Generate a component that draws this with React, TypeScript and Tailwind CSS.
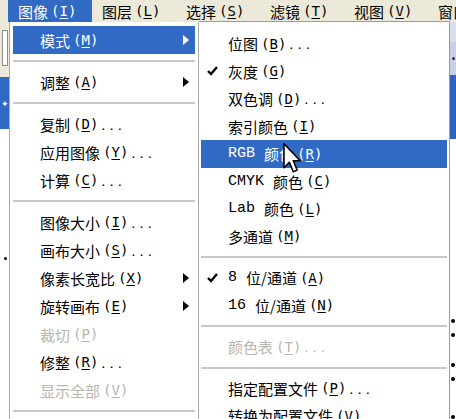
import React from 'react';

type Row = {
  sep?: boolean;
  label?: string;
  latin?: string;
  k?: string;
  dots?: boolean;
  arrow?: boolean;
  off?: boolean;
  check?: boolean;
  active?: boolean;
};

const leftItems: Row[] = [
  { label: '模式', k: 'M', arrow: true, active: true },
  { sep: true },
  { label: '调整', k: 'A', arrow: true },
  { sep: true },
  { label: '复制', k: 'D', dots: true },
  { label: '应用图像', k: 'Y', dots: true },
  { label: '计算', k: 'C', dots: true },
  { sep: true },
  { label: '图像大小', k: 'I', dots: true },
  { label: '画布大小', k: 'S', dots: true },
  { label: '像素长宽比', k: 'X', arrow: true },
  { label: '旋转画布', k: 'E', arrow: true },
  { label: '裁切', k: 'P', off: true },
  { label: '修整', k: 'R', dots: true },
  { label: '显示全部', k: 'V', off: true },
  { sep: true },
];

const subItems: Row[] = [
  { label: '位图', k: 'B', dots: true },
  { label: '灰度', k: 'G', check: true },
  { label: '双色调', k: 'D', dots: true },
  { label: '索引颜色', k: 'I' },
  { latin: 'RGB', label: '颜色', k: 'R', active: true },
  { latin: 'CMYK', label: '颜色', k: 'C' },
  { latin: 'Lab', label: '颜色', k: 'L' },
  { label: '多通道', k: 'M' },
  { sep: true },
  { latin: '8', label: '位/通道', k: 'A', check: true },
  { latin: '16', label: '位/通道', k: 'N' },
  { sep: true },
  { label: '颜色表', k: 'T', dots: true, off: true },
  { sep: true },
  { label: '指定配置文件', k: 'P', dots: true },
  { label: '转换为配置文件', k: 'V', dots: true },
];

const Mnemonic = ({ k }: { k: string }) => (
  <span className="ml-[3px] font-['DejaVu_Sans_Mono',monospace] text-[14px]">
    (<span className="underline underline-offset-2">{k}</span>)
  </span>
);

const Check = () => (
  <svg width="11" height="10" viewBox="0 0 11 10" className="absolute left-[6px] top-1/2 -translate-y-1/2">
    <path d="M1 5 L4 8 L10 1" fill="none" stroke="#000" strokeWidth="2.4" />
  </svg>
);

const Arrow = ({ white }: { white?: boolean }) => (
  <svg width="6" height="10" viewBox="0 0 6 10" className="absolute right-[6px] top-1/2 -translate-y-1/2">
    <path d="M0 0 L6 5 L0 10 Z" fill={white ? '#fff' : '#000'} />
  </svg>
);

const MenuRow = ({ row, pad, h }: { row: Row; pad: string; h: string }) => {
  if (row.sep) {
    return (
      <div className="h-[14px] flex items-center">
        <div className="w-full h-[2px] bg-[#c8c8c8]" />
      </div>
    );
  }
  const tone = row.active ? 'bg-[#316ac5] text-white' : row.off ? 'text-[#b8b6ae]' : 'text-black';
  return (
    <div className={`relative flex items-center whitespace-nowrap ${h} ${pad} ${tone}`}>
      {row.check && <Check />}
      {row.latin && (
        <span className="mr-[9px] font-['Liberation_Mono',monospace] text-[15px]">{row.latin}</span>
      )}
      <span>{row.label}</span>
      {row.k && <Mnemonic k={row.k} />}
      {row.dots && <span className="ml-[3px] tracking-[4px] font-['Liberation_Sans',sans-serif]">...</span>}
      {row.arrow && <Arrow white={row.active} />}
    </div>
  );
};

const bar = [
  { t: '图像', k: 'I' },
  { t: '图层', k: 'L' },
  { t: '选择', k: 'S' },
  { t: '滤镜', k: 'T' },
  { t: '视图', k: 'V' },
  { t: '窗口', k: 'W' },
];

export default function App() {
  return (
    <div className="w-[456px] h-[419px] overflow-hidden bg-white relative font-['Noto_Sans_CJK_SC',sans-serif] text-[15px] leading-none">
      {/* Menu bar */}
      <div className="h-[22px] bg-[#ece9d8] flex pl-[8px]">
        {bar.map((b, i) => (
          <div
            key={b.t}
            className={`w-[84px] shrink-0 flex items-center pl-[10px] whitespace-nowrap ${i === 0 ? 'bg-[#316ac5] text-white' : 'text-black'}`}
          >
            <span>{b.t}</span>
            <span className="ml-[3px] font-['DejaVu_Sans_Mono',monospace] text-[14px]">
              (<span className="underline underline-offset-2">{b.k}</span>)
            </span>
          </div>
        ))}
      </div>

      <div className="flex h-[397px]">
        {/* Left window edge */}
        <div className="w-[9px] shrink-0 flex flex-col">
          <div className="h-[55px] bg-[#ece9d8] pt-[8px]">
            <div className="ml-[2px] w-[6px] h-[36px] bg-white border border-[#8f8f8f]" />
          </div>
          <div className="h-[52px] bg-[#3068c6] flex items-center justify-center text-white text-[9px]">✦</div>
          <div className="flex-1 bg-white relative">
            <div className="absolute left-[4px] top-[128px] w-[3px] h-[3px] rounded-full bg-black" />
          </div>
        </div>

        {/* Image menu */}
        <div className="w-[190px] shrink-0 border-x border-[#a9a9a9] bg-white px-[3px] pt-[4px]">
          {leftItems.map((r, i) => (
            <MenuRow key={i} row={r} pad="pl-[27px]" h="h-[28px]" />
          ))}
        </div>

        {/* Mode submenu */}
        <div className="w-[251px] shrink-0 -mt-px border-t border-r border-[#9d9d9d] bg-white px-[2px] pt-[8px]">
          {subItems.map((r, i) => (
            <MenuRow key={i} row={r} pad="pl-[27px]" h="h-[27.5px]" />
          ))}
        </div>

        {/* Right window edge */}
        <div className="flex-1 flex flex-col">
          <div className="h-[20px] bg-[#d9dfe9]" />
          <div className="h-[33px] bg-[#c6d1e5] flex items-center justify-center">
            <div className="w-[3px] h-[3px] rounded-full bg-[#333]" />
          </div>
          <div className="h-[65px] bg-[#2d62c3]" />
          <div className="flex-1 bg-white flex flex-col items-center pt-[180px] gap-[10px]">
            <div className="w-[4px] h-[4px] rounded-full bg-black" />
            <div className="w-[4px] h-[4px] rounded-full bg-black" />
            <div className="w-[4px] h-[4px] rounded-full bg-black mt-[16px]" />
            <div className="w-[4px] h-[4px] rounded-full bg-black" />
            <div className="w-[4px] h-[4px] rounded-full bg-black mt-[24px]" />
          </div>
        </div>
      </div>

      {/* Mouse pointer */}
      <svg width="19" height="31" viewBox="0 0 12 20" className="absolute left-[283px] top-[143px]">
        <path d="M0.5 0.5 L0.5 16 L4 12.5 L6.5 18.5 L9 17.5 L6.5 11.5 L11 11.5 Z" fill="#fff" stroke="#000" strokeWidth="1" strokeLinejoin="round" />
      </svg>
    </div>
  );
}
